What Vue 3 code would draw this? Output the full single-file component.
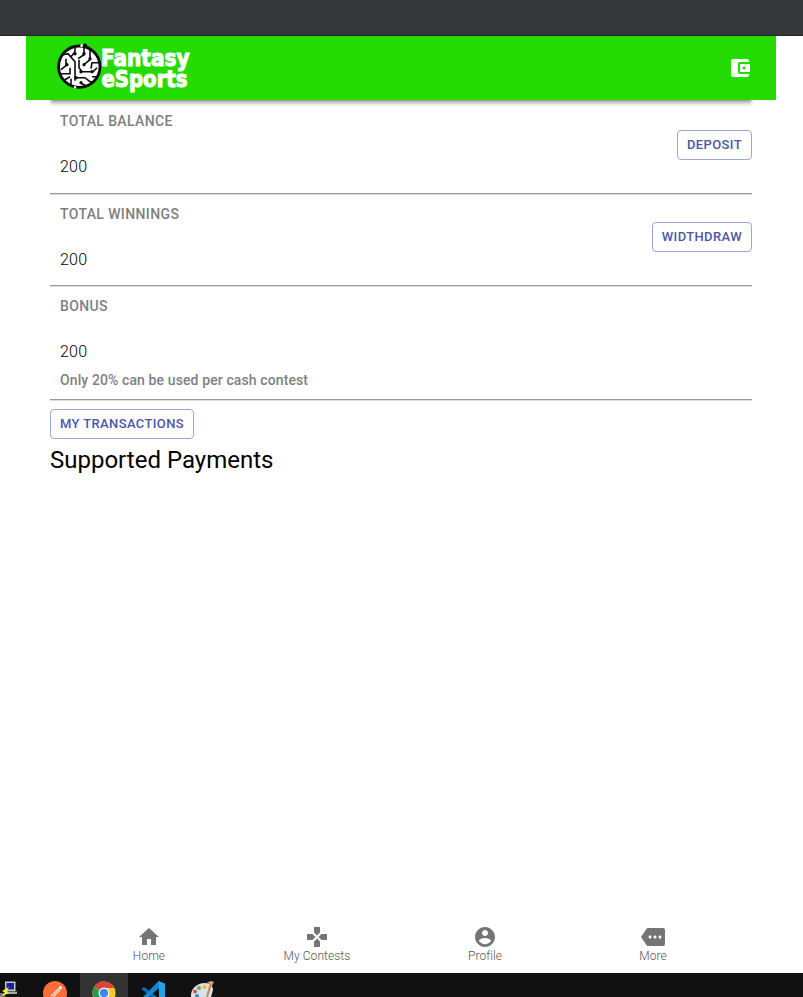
<script setup>
const navItems = [
  { label: 'Home', d: 'M10 20v-6h4v6h5v-8h3L12 3 2 12h3v8z' },
  {
    label: 'My Contests',
    d: 'M15 7.5V2H9v5.5l3 3 3-3zM7.5 9H2v6h5.5l3-3-3-3zM9 16.5V22h6v-5.5l-3-3-3 3zM16.5 9l-3 3 3 3H22V9h-5.5z'
  },
  {
    label: 'Profile',
    d: 'M12 2C6.48 2 2 6.48 2 12s4.48 10 10 10 10-4.48 10-10S17.52 2 12 2zm0 3c1.66 0 3 1.34 3 3s-1.34 3-3 3-3-1.34-3-3 1.34-3 3-3zm0 14.2c-2.5 0-4.71-1.28-6-3.22.03-1.99 4-3.08 6-3.08 1.99 0 5.97 1.09 6 3.08-1.29 1.94-3.5 3.22-6 3.22z'
  },
  {
    label: 'More',
    d: 'M22 3H7c-.69 0-1.23.35-1.59.88L0 12l5.41 8.11c.36.53.9.89 1.59.89h15c1.1 0 2-.9 2-2V5c0-1.1-.9-2-2-2zM9 13.5c-.83 0-1.5-.67-1.5-1.5s.67-1.5 1.5-1.5 1.5.67 1.5 1.5-.67 1.5-1.5 1.5zm5 0c-.83 0-1.5-.67-1.5-1.5s.67-1.5 1.5-1.5 1.5.67 1.5 1.5-.67 1.5-1.5 1.5zm5 0c-.83 0-1.5-.67-1.5-1.5s.67-1.5 1.5-1.5 1.5.67 1.5 1.5-.67 1.5-1.5 1.5z'
  }
]
</script>

<template>
  <div class="screen">
    <div class="window-bar"></div>
    <header class="app-bar">
      <svg class="logo" width="136" height="58" viewBox="0 0 136 58">
        <g transform="translate(0 .7)">
          <circle cx="23.3" cy="25" r="20.7" fill="#fff" stroke="#0c0c0c" stroke-width="2.8" />
          <g fill="none" stroke="#0c0c0c" stroke-width="1.6">
            <path d="M7 13l5-1 7 8v19M19 4v6l-4 5M28 5v8l-6 4M10 17v7l-5 4M4 32h10v-6M9 38l5-3M23 18v8l3 4h11l4-4M34 8v10l-6 5M43 21h-7l-1 6M20 36h9l5 4h5M24 41l6 3M36 35h6M15 43v-6" />
          </g>
          <g fill="#0c0c0c">
            <circle cx="29" cy="4" r="2.200" /><circle cx="19" cy="12" r="1.7" /><circle cx="28" cy="12" r="1.7" />
            <circle cx="11" cy="23" r="1.6" /><circle cx="34" cy="17" r="1.7" /><circle cx="28" cy="23" r="1.6" />
            <circle cx="36" cy="30" r="1.6" /><circle cx="25" cy="30" r="1.7" />
            <circle cx="20" cy="36" r="1.7" /><circle cx="25" cy="41" r="1.6" />
          </g>
          <path d="M24.500 3.500l2.200 1M18 46l2-1" stroke="#fff" stroke-width="2.4" />
        </g>
        <g class="wordmark">
          <text x="45" y="25" textLength="88.500" lengthAdjust="spacingAndGlyphs">Fantasy</text>
          <text x="45.500" y="46" textLength="86" lengthAdjust="spacingAndGlyphs">eSports</text>
        </g>
      </svg>
      <svg class="wallet" width="24" height="24" viewBox="0 0 24 24">
        <path fill="#fff" d="M21 18v1c0 1.100-.9 2-2 2H5c-1.110 0-2-.9-2-2V5c0-1.100.89-2 2-2h14c1.100 0 2 .9 2 2v1h-9c-1.110 0-2 .9-2 2v8c0 1.100.89 2 2 2h9zm-9-2h10V8H12v8zm4-2.500c-.83 0-1.500-.67-1.500-1.500s.67-1.500 1.500-1.500 1.500.67 1.500 1.500-.67 1.500-1.500 1.500z" />
      </svg>
    </header>
    <main class="content">
      <section class="row">
        <div class="info">
          <h2 class="label">TOTAL BALANCE</h2>
          <p class="amount">200</p>
        </div>
        <button class="btn">DEPOSIT</button>
      </section>
      <section class="row winnings">
        <div class="info">
          <h2 class="label">TOTAL WINNINGS</h2>
          <p class="amount">200</p>
        </div>
        <button class="btn">WIDTHDRAW</button>
      </section>
      <section class="row bonus">
        <div class="info">
          <h2 class="label">BONUS</h2>
          <p class="amount">200</p>
          <p class="note">Only 20% can be used per cash contest</p>
        </div>
      </section>
      <button class="btn transactions">MY TRANSACTIONS</button>
      <h1 class="heading">Supported Payments</h1>
    </main>
    <nav class="bottom-nav">
      <a v-for="item in navItems" :key="item.label" class="nav-item">
        <svg width="24" height="24" viewBox="0 0 24 24"><path :d="item.d" fill="#757575" /></svg>
        <span>{{ item.label }}</span>
      </a>
    </nav>
    <footer class="taskbar">
      <svg class="putty" width="20" height="24" viewBox="0 0 20 24">
        <path d="M5 8.500h10.500V18H5z" fill="#c9c9cd" /><path d="M6.500 10h7.500v6.500H6.500z" fill="#1421a8" />
        <path d="M6 18.500h11V21H6z" fill="#a8a8ac" /><path d="M0 20h5v4H0z" fill="#707078" />
        <path d="M9 14l-7 4 3 1.500-5 4.500 9-4-2-2z" fill="#fff02a" />
      </svg>
      <svg class="postman" width="24" height="24" viewBox="0 0 24 24">
        <circle cx="12" cy="20" r="12" fill="#ff6c37" />
        <path d="M8 23l8.500-8M10.500 23.500l7-7" stroke="#ffe4da" stroke-width="1.200" />
        <circle cx="17.500" cy="14.500" r="1.500" fill="#fff" />
      </svg>
      <div class="active-app">
        <svg width="24" height="24" viewBox="0 0 24 24">
          <circle cx="12" cy="20" r="11.500" fill="#fbc926" />
          <path d="M12 20L2 14A11.500 11.500 0 0 1 22.300 15H12z" fill="#dc4437" />
          <path d="M2 14A11.500 11.500 0 0 0 8 30L14 22z" fill="#1d9d58" />
          <circle cx="12" cy="20" r="5.500" fill="#fff" /><circle cx="12" cy="20" r="4.300" fill="#4286f5" />
        </svg>
      </div>
      <svg class="vscode" width="26" height="24" viewBox="0 0 26 24">
        <path d="M1.500 16l2.500-2 17 13-2 3z" fill="#0874bb" />
        <path d="M3 24L18.500 8l1.500 1v5L9 24z" fill="#1388d0" />
        <path d="M18.500 8l6.500 2.500V24h-6z" fill="#28a0e8" />
      </svg>
      <svg class="paint" width="26" height="24" viewBox="0 0 26 24">
        <path d="M1 24C0 16 7 10 15 10c6 0 8 4 8 7l-2 7z" fill="#d7e2e8" />
        <circle cx="5" cy="18.500" r="2" fill="#df5347" /><circle cx="9" cy="15" r="2" fill="#67ac43" />
        <circle cx="14.500" cy="14" r="2" fill="#e9b73c" /><circle cx="7" cy="23" r="2" fill="#3b84c5" />
        <path d="M17 24l3.500-12" stroke="#c98a58" stroke-width="2.200" />
        <path d="M17 9.500l5 3.500 2-4-3-1z" fill="#d9a06f" />
      </svg>
    </footer>
  </div>
</template>

<style>
body { margin: 0; background: #fff; }
</style>

<style scoped>
.screen {
  display: flex;
  flex-direction: column;
  height: 997px;
  overflow: hidden;
  background: #fff;
  font-family: Roboto, sans-serif;
}
.window-bar { box-sizing: border-box; height: 36px; flex: none; background: #35363a; border-bottom: 1px solid #242528; }
.app-bar {
  display: flex;
  flex: none;
  box-sizing: border-box;
  align-items: flex-start;
  justify-content: space-between;
  height: 64px;
  margin: 0 27px 0 26px;
  padding: 5px 24px 0 30px;
  background: #24db00;
}
.logo { overflow: visible; }
.wallet { margin-top: 15px; }
.wordmark { font-family: 'DejaVu Sans Condensed', 'DejaVu Sans', sans-serif; font-size: 22.5px; font-weight: 700; fill: #fff; stroke: #fff; stroke-width: 1px; }
.content { flex: 1; margin: 0 51px 0 50px; }
.content::before {
  content: '';
  display: block;
  height: 7px;
  margin: 0 -2px -7px;
  background: linear-gradient(#999, #ccc 35%, #f0f0f0 70%, #fff);
  mask-image: linear-gradient(90deg, transparent, #000 5px calc(100% - 5px), transparent);
}
.row {
  display: flex;
  box-sizing: border-box;
  justify-content: space-between;
  height: 94px;
  border-bottom: 1px solid #9a9a9a;
  box-shadow: 0 1px #ddd;
  padding-top: 11px;
}
.winnings { height: 92px; padding-top: 10px; }
.bonus { height: 114px; padding-top: 10px; }
.info { padding-left: 10px; }
.label { margin: 0; font-size: 14px; line-height: 20px; font-weight: 500; letter-spacing: 0.38px; color: #808080; }
.amount { margin: 24px 0 0; font-size: 16px; line-height: 24px; font-weight: 300; letter-spacing: 0.2px; color: #000; }
.note { margin: 6px 0 0; font-size: 14px; line-height: 20px; font-weight: 500; letter-spacing: 0.11px; color: #808080; }
.btn {
  box-sizing: border-box;
  height: 30px;
  margin: 19px 0 0;
  padding: 0 9px;
  border: 1px solid #9fa8d0;
  border-radius: 4px;
  background: transparent;
  font: 500 13px/28px Roboto, sans-serif;
  letter-spacing: 0.38px;
  color: #4a57a9;
}
.winnings .btn { margin-top: 18px; }
.transactions { display: block; margin-top: 9px; }
.heading { margin: 5px 0 0; font-size: 24px; line-height: 32px; font-weight: 400; color: #000; }
.bottom-nav { display: flex; flex: none; box-sizing: border-box; height: 56px; padding: 8px 66px 0 65px; justify-content: center; }
.nav-item { display: flex; flex-direction: column; align-items: center; width: 168px; font-size: 12px; line-height: 14px; font-weight: 300; letter-spacing: 0.05px; color: #555; }
.taskbar { display: flex; flex: none; height: 24px; background: #111; }
.postman { margin-left: 23px; }
.active-app { width: 48px; margin-left: 13px; background: #333; }
.active-app svg { display: block; margin: 0 auto; }
.vscode { margin-left: 12px; }
.paint { margin-left: 24px; }
</style>
